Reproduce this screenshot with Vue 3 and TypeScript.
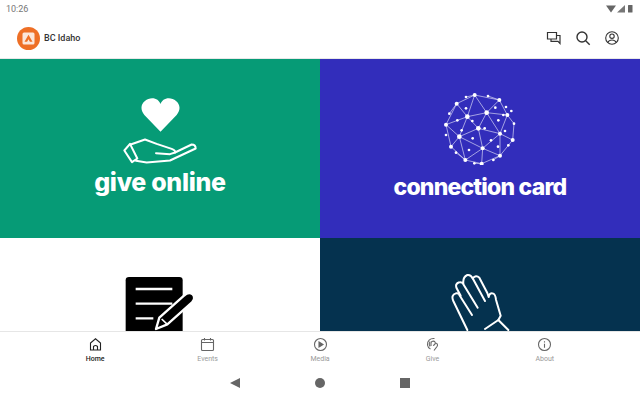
<script setup lang="ts">
const navItems = [
  { label: 'Home', active: true },
  { label: 'Events', active: false },
  { label: 'Media', active: false },
  { label: 'Give', active: false },
  { label: 'About', active: false },
];

// globe nodes, [x, y, r]
const nodes: number[][] = [
  [284, 32, 6], [230, 58, 6], [358, 47, 6], [262, 97, 7], [320, 85, 7], [382, 92, 6],
  [198, 121, 6], [295, 132, 7], [360, 148, 6], [238, 157, 7], [398, 167, 6], [213, 187, 6],
  [308, 192, 6], [360, 214, 6], [256, 227, 6], [305, 238, 6], [258, 38, 4], [324, 35, 4],
  [378, 68, 4], [394, 80, 4], [208, 88, 4], [258, 72, 4], [346, 70, 4], [402, 118, 4],
  [370, 92, 4], [355, 108, 4], [232, 108, 4], [277, 110, 4], [314, 132, 4], [245, 138, 4],
  [198, 152, 4], [278, 162, 4], [333, 168, 4], [375, 140, 4], [354, 187, 4], [385, 183, 4],
  [228, 205, 4], [267, 197, 4], [340, 227, 4], [283, 237, 4],
];
const edges: number[][] = [
  [0, 1], [0, 2], [0, 3], [0, 4], [1, 3], [1, 6], [2, 4], [2, 5], [3, 4], [3, 6], [3, 7], [3, 9],
  [4, 5], [4, 7], [4, 8], [5, 8], [5, 23], [6, 9], [6, 11], [7, 8], [7, 9], [7, 12], [8, 10], [8, 12],
  [8, 13], [9, 11], [9, 12], [9, 14], [10, 13], [11, 14], [12, 13], [12, 14], [12, 15], [14, 15], [13, 15],
  [23, 10], [16, 0], [17, 2], [20, 1], [36, 14], [39, 15], [38, 13],
];
</script>

<template>
  <div class="screen">
    <div class="status">
      <span class="time">10:26</span>
      <svg class="status-icons" width="30" height="10" viewBox="0 0 30 10">
        <path d="M2 1.500h10L7 8.500z" fill="#666" />
        <path d="M13 8.500l8-7.500v7.500z" fill="#777" />
        <rect x="24" y="1" width="4.500" height="7.500" rx=".5" fill="#666" />
      </svg>
    </div>

    <header class="appbar">
      <div class="brand">
        <svg width="23" height="23" viewBox="0 0 23 23">
          <circle cx="11.500" cy="11.500" r="11.500" fill="#ee6f26" />
          <rect x="5.500" y="5.500" width="12" height="12" rx="1.500" fill="#fbe6da" />
          <path d="M11.500 7.800l4 7h-2.600l-1.400-2.500-1.400 2.500H7.500z" fill="#ee6f26" />
        </svg>
        <span>BC Idaho</span>
      </div>
      <div class="actions">
        <svg width="16" height="16" viewBox="0 0 16 16" fill="none" stroke="#333" stroke-width="1.200">
          <path d="M1.500 2.500h9v6.500h-9z" />
          <path d="M10.500 5.500h3.500v8l-2-2.200H5V9" />
        </svg>
        <svg width="16" height="16" viewBox="0 0 16 16" fill="none" stroke="#333" stroke-width="1.400">
          <circle cx="7" cy="7" r="5" />
          <path d="M10.700 10.700l4 4" />
        </svg>
        <svg width="16" height="16" viewBox="0 0 16 16" fill="none" stroke="#333" stroke-width="1.100">
          <circle cx="8" cy="8" r="6.300" />
          <circle cx="8" cy="6.200" r="2.200" />
          <path d="M3.800 12.500c1-2 2.500-2.500 4.200-2.500s3.200.5 4.200 2.500" />
        </svg>
      </div>
    </header>

    <main class="tiles">
      <section class="tile give">
        <svg class="heart" width="39" height="34" viewBox="182 38 116 100">
          <path d="M240 138L192 88C170 60 195 38 215 38C228 38 236 45 240 55C244 45 252 38 265 38C285 38 310 60 288 88Z" fill="#fff" />
        </svg>
        <svg class="hand" width="80" height="27" viewBox="120 150 240 80" fill="none" stroke="#fff" stroke-width="6" stroke-linejoin="round" stroke-linecap="round">
          <path d="M133 190L150 170L172 214L156 225Z" />
          <path d="M152 172L195 157L230 170L275 185Q288 190 285 196L335 172Q347 172 347 184L270 220L200 226L168 221" />
          <path d="M228 198L270 201L285 196" />
        </svg>
        <h2>give online</h2>
      </section>

      <section class="tile connect">
        <svg class="globe" width="72" height="72" viewBox="192 26 216 216">
          <line v-for="(e, i) in edges" :key="i" :x1="nodes[e[0]][0]" :y1="nodes[e[0]][1]" :x2="nodes[e[1]][0]" :y2="nodes[e[1]][1]" stroke="#dcdcf6" stroke-width="2" />
          <circle v-for="(n, i) in nodes" :key="'n' + i" :cx="n[0]" :cy="n[1]" :r="n[2]" fill="#fff" />
        </svg>
        <h2>connection card</h2>
      </section>

      <section class="tile notes">
        <svg width="100" height="67" viewBox="0 0 300 201">
          <rect x="47" y="36" width="171" height="190" rx="10" fill="#000" />
          <path d="M77 72H187M77 116H187M77 160H130" stroke="#fff" stroke-width="7" />
          <path d="M222 92Q236 78 248 88Q258 100 246 112L172 178L138 192L148 158Z" fill="#000" stroke="#fff" stroke-width="7" stroke-linejoin="round" />
          <path d="M155 162L172 178" stroke="#fff" stroke-width="5" />
        </svg>
      </section>

      <section class="tile prayer">
        <svg width="100" height="67" viewBox="0 0 300 201" fill="none" stroke="#fff" stroke-width="6" stroke-linejoin="round" stroke-linecap="round">
          <path d="M112 195L70 108Q62 90 78 85Q86 83 92 92L80 70Q74 56 88 52Q94 50 100 56Q98 36 112 30Q122 28 128 40Q138 28 148 38L172 84L176 96Q178 82 190 86Q196 88 198 104L212 152L205 165" />
          <path d="M88 90L126 150M100 58L143 128M128 40L165 108" />
          <path d="M165 192L205 165L235 195" />
        </svg>
      </section>
    </main>

    <nav class="bottom-nav">
      <div v-for="(item, i) in navItems" :key="item.label" class="nav-item" :class="{ active: item.active }">
        <svg width="15" height="15" viewBox="0 0 15 15" fill="none" stroke="currentColor" stroke-width="1.100">
          <template v-if="i === 0">
            <path d="M2.500 13V6L7.500 1.800L12.500 6V13Z" />
            <path d="M5.500 13V9.500Q7.500 7.500 9.500 9.500V13" />
          </template>
          <template v-else-if="i === 1">
            <rect x="1.500" y="2.500" width="12" height="11" rx="1" />
            <path d="M1.500 5.500h12M4.500 1v2.500M10.500 1v2.500" />
          </template>
          <template v-else-if="i === 2">
            <circle cx="7.500" cy="7.500" r="6" />
            <path d="M6 5l4 2.500-4 2.500z" fill="currentColor" />
          </template>
          <template v-else-if="i === 3">
            <path d="M9.500 1.500C5 1 2 4 2.500 8c.3 2 1.500 3.500 3 4" />
            <path d="M6 9V6c0-2 3-2.500 4-1 1 1.500-.5 3-2 3.500M10.500 6c2 0 2.500 2 1.500 3.500l-3 4" />
            <path d="M5 4.500C4 6 4 8 5 9.500" />
          </template>
          <template v-else>
            <circle cx="7.500" cy="7.500" r="6" />
            <path d="M7.500 6.800v4M7.500 4.200v1.300" />
          </template>
        </svg>
        <span>{{ item.label }}</span>
      </div>
    </nav>

    <div class="system-nav">
      <span class="back"></span>
      <span class="home"></span>
      <span class="recent"></span>
    </div>
  </div>
</template>

<style scoped>
.screen {
  width: 640px;
  height: 400px;
  overflow: hidden;
  background: #fff;
  display: flex;
  flex-direction: column;
  font-family: Roboto, "Liberation Sans", sans-serif;
}

.status {
  height: 18px;
  padding: 0 6px;
  display: flex;
  align-items: center;
  justify-content: space-between;
}

.time {
  font-size: 9px;
  color: #777;
}

.appbar {
  height: 40px;
  padding: 0 20px 0 17px;
  border-bottom: 1px solid #e8e8e8;
  display: flex;
  align-items: center;
  justify-content: space-between;
}

.brand {
  display: flex;
  align-items: center;
  gap: 4px;
  font-size: 9px;
  font-weight: 500;
  color: #333;
}

.actions {
  display: flex;
  gap: 13px;
}

.tiles {
  height: 272px;
  overflow: hidden;
  display: grid;
  grid-template-columns: 320px 320px;
  grid-template-rows: 179px 179px;
}

.tile {
  display: flex;
  flex-direction: column;
  align-items: center;
}

.tile h2 {
  margin: 0;
  font-family: Inter, sans-serif;
  font-weight: 800;
  color: #fff;
  white-space: nowrap;
}

.give {
  background: #069b76;
  padding-top: 39px;
}

.hand {
  margin-top: 5px;
}

.give h2 {
  margin-top: 1px;
  font-size: 25px;
  line-height: 34px;
  letter-spacing: -0.3px;
}

.connect {
  background: #322dbb;
  padding-top: 34px;
}

.connect h2 {
  margin-top: 7px;
  font-size: 23px;
  line-height: 30px;
  letter-spacing: -0.8px;
}

.notes {
  background: #fff;
  padding-top: 27px;
}

.prayer {
  background: #05324f;
  padding-top: 27px;
}

.bottom-nav {
  height: 41px;
  padding: 5px 39px 0;
  box-sizing: border-box;
  display: flex;
  border-top: 1px solid #e6e6e6;
}

.nav-item {
  flex: 1;
  display: flex;
  flex-direction: column;
  align-items: center;
  gap: 3px;
  font-size: 7px;
  line-height: 9px;
  color: #999;
}

.nav-item svg {
  color: #666;
}

.nav-item.active,
.nav-item.active svg {
  color: #222;
  font-weight: 500;
}

.system-nav {
  flex: 1;
  padding-bottom: 6px;
  display: flex;
  align-items: center;
  justify-content: center;
  gap: 75px;
}

.back {
  width: 0;
  height: 0;
  border-top: 5.500px solid transparent;
  border-bottom: 5.500px solid transparent;
  border-right: 10px solid #666;
}

.home {
  width: 10px;
  height: 10px;
  border-radius: 50%;
  background: #666;
}

.recent {
  width: 10px;
  height: 10px;
  background: #666;
}
</style>
